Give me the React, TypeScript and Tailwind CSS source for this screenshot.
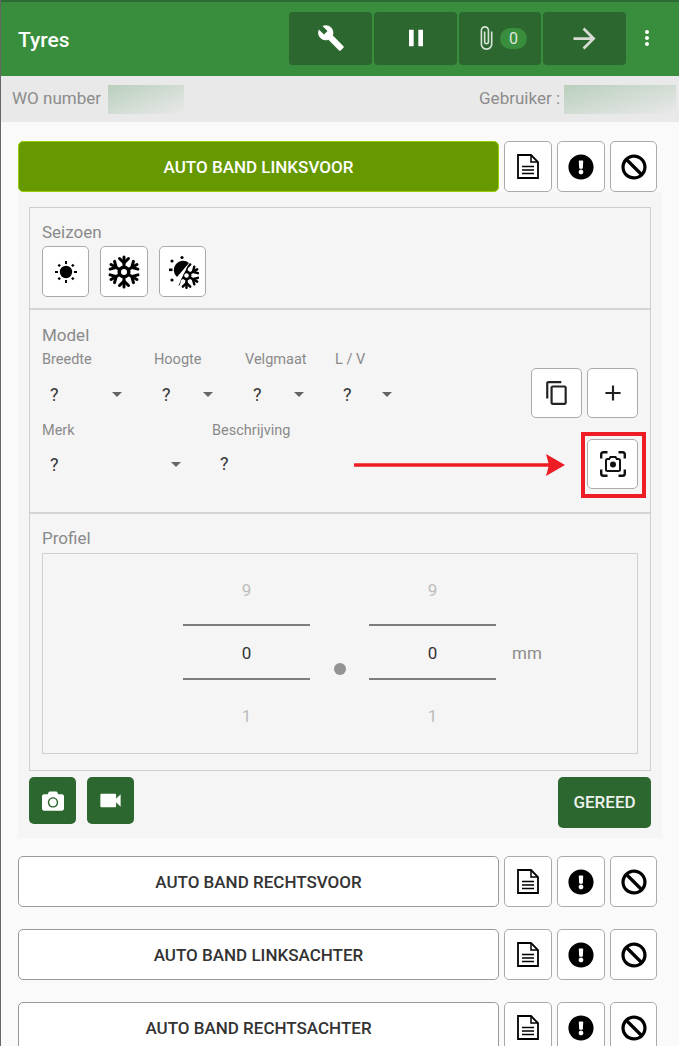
import React from "react";
import { MdBuild, MdPause, MdAttachFile, MdArrowForward, MdMoreVert, MdContentCopy, MdAdd, MdVideocam } from "react-icons/md";
import { FaExclamationCircle, FaBan, FaCamera } from "react-icons/fa";

const Sun = () => (
  <svg width="26" height="26" viewBox="0 0 26 26" fill="#000">
    <circle cx="13" cy="13" r="6.200" />
    <rect x="12" y="2" width="2" height="3" />
    <rect x="12" y="21" width="2" height="3" />
    <rect x="2" y="12" width="3" height="2" />
    <rect x="21" y="12" width="3" height="2" />
    <rect x="5" y="5.200" width="2.400" height="2.400" transform="rotate(45 6.200 6.400)" />
    <rect x="5" y="18.400" width="2.400" height="2.400" transform="rotate(45 6.200 19.600)" />
    <rect x="18.600" y="5.200" width="2.400" height="2.400" transform="rotate(45 19.800 6.400)" />
    <rect x="18.600" y="18.400" width="2.400" height="2.400" transform="rotate(45 19.800 19.600)" />
  </svg>
);

const ANGLES = [0, 60, 120, 180, 240, 300];

const FlakeArms = ({ stroke = "#000", extra = 0 }: { stroke?: string; extra?: number }) => (
  <g stroke={stroke} strokeWidth={3 + extra} fill="none" strokeLinecap="round">
    {ANGLES.map((a) => (
      <g key={a} transform={`rotate(${a} 18 18)`}>
        <path d="M18 18V3" />
        <path d="M13.500 4.500L18 9L22.500 4.500" />
      </g>
    ))}
  </g>
);

const Flake = () => (
  <svg width="36" height="36" viewBox="0 0 36 36">
    <FlakeArms />
    <circle cx="18" cy="18" r="6.500" fill="#000" />
    <circle cx="18" cy="18" r="3" fill="#fff" />
  </svg>
);

const Mixed = () => (
  <svg width="32" height="34" viewBox="0 0 32 34" fill="#000">
    <path d="M22 8A8.500 8.500 0 0 0 10 22Z" />
    <circle cx="15" cy="2.500" r="1.600" />
    <rect x="2" y="13.500" width="3.500" height="2.600" />
    <circle cx="5" cy="6" r="1.600" />
    <circle cx="5" cy="25" r="1.600" />
    <g transform="translate(4.750 5.750) scale(0.82)">
      <g clipPath="url(#mixclip)">
        <FlakeArms stroke="#fff" extra={2.500} />
        <FlakeArms />
        <circle cx="18" cy="18" r="6" fill="#000" />
        <circle cx="18" cy="18" r="2.800" fill="#fff" />
      </g>
    </g>
    <defs>
      <clipPath id="mixclip">
        <polygon points="24,-3 42,-3 42,42 3,42 12,22" />
      </clipPath>
    </defs>
  </svg>
);

const Scan = () => (
  <svg width="26" height="26" viewBox="0 0 26 26" fill="none" stroke="#111" strokeWidth="2.400">
    <path d="M1.200 7.500V3.500a2.300 2.300 0 0 1 2.300-2.300h4M18.500 1.200h4a2.300 2.300 0 0 1 2.300 2.300v4M24.800 18.500v4a2.300 2.300 0 0 1-2.300 2.300h-4M7.500 24.800h-4a2.300 2.300 0 0 1-2.300-2.300v-4" />
    <path d="M6 9.500a1.500 1.500 0 0 1 1.500-1.500h1.700l1.300-2h5l1.300 2h1.700a1.500 1.500 0 0 1 1.500 1.500v9a1.500 1.500 0 0 1-1.500 1.500h-11a1.500 1.500 0 0 1-1.500-1.500z" strokeWidth="2" />
    <circle cx="13" cy="13.500" r="3" fill="#111" stroke="none" />
  </svg>
);

const Doc = () => (
  <svg width="22" height="25" viewBox="0 0 22 25" fill="none" stroke="#000">
    <path d="M1 1H14L21 8V24H1Z" strokeWidth="1.800" />
    <path d="M14 1V8H21" strokeWidth="1.500" />
    <path d="M5 12.500H17M5 16H17M5 19.500H17" strokeWidth="1.700" />
  </svg>
);

const IconBtn = ({ children, className = "" }: { children: React.ReactNode; className?: string }) => (
  <button className={`flex items-center justify-center bg-white border border-[#aaaaaa] rounded-[5px] shrink-0 ${className}`}>{children}</button>
);

const RowActions = () => (
  <div className="flex gap-[5px] ml-[5px]">
    <IconBtn className="w-[48px] h-[51px]"><Doc /></IconBtn>
    <IconBtn className="w-[48px] h-[51px]"><FaExclamationCircle className="text-[26px] text-black" /></IconBtn>
    <IconBtn className="w-[47px] h-[51px]"><FaBan className="text-[26px] text-black" /></IconBtn>
  </div>
);

const Row = ({ label, active = false }: { label: string; active?: boolean }) => (
  <div className="flex pr-[22px]">
    <button className={`w-[481px] h-[51px] pt-[2px] shrink-0 rounded-[5px] border text-[17px] font-medium ${active ? "bg-[#669900] border-[#99cc00] text-white" : "bg-white border-[#999999] text-[#333333]"}`}>{label}</button>
    <RowActions />
  </div>
);

const HeaderBtn = ({ children, w = "w-[83px]" }: { children: React.ReactNode; w?: string }) => (
  <button className={`${w} h-[53px] flex items-center justify-center bg-[#2b672e] rounded-[4px]`}>{children}</button>
);

const Caret = () => <span className="w-0 h-0 border-x-[5px] border-x-transparent border-t-[5px] border-t-[#666666]" />;

const Select = ({ w, inner }: { w: string; inner: string }) => (
  <div className={`${w} h-[26px] flex items-center`}>
    <div className={`${inner} flex items-center justify-between text-[18px] text-[#333333]`}>
      <span className="pl-[8px]">?</span>
      <Caret />
    </div>
  </div>
);

const Lbl = ({ w, children }: { w: string; children: React.ReactNode }) => (
  <div className={`${w} text-[14.500px] leading-[18px] text-[#8a8a8a]`}>{children}</div>
);

const Wheel = () => (
  <div className="w-[127px] flex flex-col items-center">
    <div className="h-[72px] w-full pt-[4px] flex items-center justify-center text-[17px] text-[#bdbdbd] border-b-2 border-[#7d7d7d]">9</div>
    <div className="h-[54px] w-full pt-[3px] flex items-center justify-center text-[17px] text-[#333333] border-b-2 border-[#7d7d7d]">0</div>
    <div className="h-[74px] w-full flex items-center justify-center text-[17px] text-[#bdbdbd]">1</div>
  </div>
);

const Blur = ({ className }: { className: string }) => (
  <div className={`bg-gradient-to-br from-[#b9cfbd] to-[#e9e9e9] ${className}`} />
);

export default function App() {
  return (
    <div className="w-[679px] h-[1046px] overflow-hidden bg-[#fafafa] border-l border-[#666666] font-['Roboto',sans-serif]">
      <header className="h-[76px] bg-[#388e3c] border-t-2 border-[#2e6b32] flex items-center pl-[17px] pb-[2px]">
        <div className="text-[21px] font-medium text-white w-[271px] mt-[5px]">Tyres</div>
        <div className="flex gap-[2px]">
          <HeaderBtn><MdBuild className="text-[28px] text-white" /></HeaderBtn>
          <HeaderBtn><MdPause className="text-[28px] text-white" /></HeaderBtn>
          <HeaderBtn w="w-[82px]">
            <MdAttachFile className="text-[26px] text-[#d8e4d8]" />
            <span className="ml-[1px] w-[27px] h-[21px] rounded-full bg-[#388e3c] text-[16px] leading-[21px] text-center text-[#dfe8df]">0</span>
          </HeaderBtn>
          <HeaderBtn><MdArrowForward className="text-[33px] text-[#d8dcd4]" /></HeaderBtn>
        </div>
        <MdMoreVert className="text-[24px] text-white ml-[9px]" />
      </header>

      <div className="h-[46px] bg-[#e9e9e9] flex items-center justify-between pl-[11px] pr-[3px] text-[17px] text-[#8c8c8c]">
        <div className="flex items-center gap-[7px]">
          <span>WO number</span>
          <Blur className="w-[76px] h-[29px]" />
        </div>
        <div className="flex items-center gap-[4px]">
          <span>Gebruiker :</span>
          <Blur className="w-[112px] h-[29px]" />
        </div>
      </div>

      <main className="pt-[19px] pl-[17px]">
        <Row label="AUTO BAND LINKSVOOR" active />
        <section className="w-[644px] h-[646px] bg-[#f5f5f5] px-[11px] pt-[15px]">
          <div className="border border-[#cfcfcf] h-[564px] flex flex-col">
            <div className="h-[102px] border-b-2 border-[#d4d4d4] px-[12px] pt-[15px] shrink-0">
              <div className="text-[17px] leading-[19px] text-[#8a8a8a]">Seizoen</div>
              <div className="flex gap-[11px] mt-[4px]">
                <IconBtn className="w-[47px] h-[51px]"><Sun /></IconBtn>
                <IconBtn className="w-[48px] h-[51px]"><Flake /></IconBtn>
                <IconBtn className="w-[47px] h-[51px]"><Mixed /></IconBtn>
              </div>
            </div>

            <div className="relative h-[204px] border-b-2 border-[#d4d4d4] pl-[12px] pr-[12px] pt-[16px] flex justify-between shrink-0">
              <div>
                <div className="text-[17px] leading-[19px] text-[#8a8a8a]">Model</div>
                <div className="flex mt-[6px]"><Lbl w="w-[112px]">Breedte</Lbl><Lbl w="w-[91px]">Hoogte</Lbl><Lbl w="w-[90px]">Velgmaat</Lbl><Lbl w="w-[60px]">L / V</Lbl></div>
                <div className="flex mt-[12px]"><Select w="w-[112px]" inner="w-[80px]" /><Select w="w-[91px]" inner="w-[59px]" /><Select w="w-[90px]" inner="w-[59px]" /><Select w="w-[58px]" inner="w-[57px]" /></div>
                <div className="flex mt-[15px]"><Lbl w="w-[170px]">Merk</Lbl><Lbl w="w-[100px]">Beschrijving</Lbl></div>
                <div className="flex mt-[11px]"><Select w="w-[170px]" inner="w-[139px]" /><div className="pl-[8px] text-[18px] leading-[26px] text-[#333333]">?</div></div>
              </div>
              <div className="flex flex-col items-end pt-[42px] gap-[21px]">
                <div className="flex gap-[5px]">
                  <IconBtn className="w-[51px] h-[50px]"><MdContentCopy className="text-[26px] text-[#222222]" /></IconBtn>
                  <IconBtn className="w-[51px] h-[50px]"><MdAdd className="text-[26px] text-[#222222]" /></IconBtn>
                </div>
                <IconBtn className="w-[51px] h-[50px]"><Scan /></IconBtn>
              </div>
              {/* annotation overlay */}
              <div className="absolute left-[551px] top-[122px] w-[65px] h-[66px] border-4 border-[#ee1c25]" />
              <svg className="absolute left-[324px] top-[142px]" width="212" height="26" viewBox="0 0 212 26">
                <path d="M1 13H195" stroke="#ee1c25" strokeWidth="3.500" strokeLinecap="round" />
                <path d="M192 2L211 13L192 24L195 13Z" fill="#ee1c25" />
              </svg>
            </div>

            <div className="flex-1 px-[12px] pt-[15px]">
              <div className="text-[17px] leading-[19px] text-[#8a8a8a]">Profiel</div>
              <div className="mt-[5px] h-[201px] border border-[#cfcfcf] flex pl-[140px]">
                <div className="flex items-start">
                  <Wheel />
                  <div className="w-[59px] h-full flex justify-center"><span className="mt-[109px] w-[12px] h-[12px] rounded-full bg-[#939393]" /></div>
                  <Wheel />
                  <span className="ml-[16px] mt-[87px] text-[17px] text-[#8c8c8c]">mm</span>
                </div>
              </div>
            </div>
          </div>

          <div className="flex justify-between items-start mt-[6px]">
            <div className="flex gap-[11px]">
              <button className="w-[47px] h-[47px] rounded-[5px] bg-[#2b672e] flex items-center justify-center"><FaCamera className="text-[22px] text-white" /></button>
              <button className="w-[47px] h-[47px] rounded-[5px] bg-[#2b672e] flex items-center justify-center"><MdVideocam className="text-[27px] text-white" /></button>
            </div>
            <button className="w-[93px] h-[51px] rounded-[5px] bg-[#2b672e] text-[17px] font-medium text-[#eef2ee]">GEREED</button>
          </div>
        </section>

        <div className="flex flex-col gap-[22px] mt-[18px]">
          <Row label="AUTO BAND RECHTSVOOR" />
          <Row label="AUTO BAND LINKSACHTER" />
          <Row label="AUTO BAND RECHTSACHTER" />
        </div>
      </main>
    </div>
  );
}
